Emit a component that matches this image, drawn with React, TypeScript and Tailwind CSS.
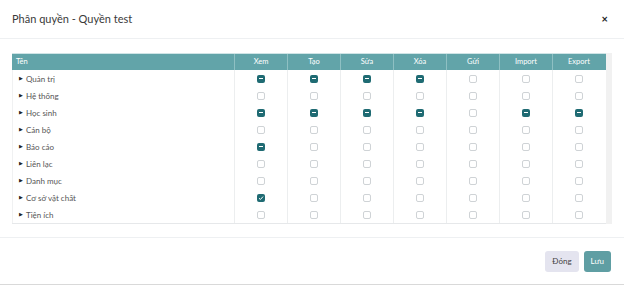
import React from 'react';

type Mark = 0 | 1 | 2; // 0 empty, 1 indeterminate, 2 checked

const columns = ['Xem', 'Tạo', 'Sửa', 'Xóa', 'Gửi', 'Import', 'Export'];

const rows: { name: string; marks: Mark[] }[] = [
  { name: 'Quản trị', marks: [1, 1, 1, 1, 0, 0, 0] },
  { name: 'Hệ thống', marks: [0, 0, 0, 0, 0, 0, 0] },
  { name: 'Học sinh', marks: [1, 1, 1, 1, 0, 1, 1] },
  { name: 'Cán bộ', marks: [0, 0, 0, 0, 0, 0, 0] },
  { name: 'Báo cáo', marks: [1, 0, 0, 0, 0, 0, 0] },
  { name: 'Liên lạc', marks: [0, 0, 0, 0, 0, 0, 0] },
  { name: 'Danh mục', marks: [0, 0, 0, 0, 0, 0, 0] },
  { name: 'Cơ sở vật chất', marks: [2, 0, 0, 0, 0, 0, 0] },
  { name: 'Tiện ích', marks: [0, 0, 0, 0, 0, 0, 0] },
];

const Box: React.FC<{ mark: Mark }> = ({ mark }) => {
  if (mark === 0) {
    return <span className="block w-[8px] h-[8px] rounded-[2px] border border-[#cfd3d6] bg-white" />;
  }
  return (
    <span className="flex items-center justify-center w-[8px] h-[8px] rounded-[2px] bg-[#1f6b73]">
      {mark === 1 ? (
        <span className="block w-[4px] h-[1.5px] bg-white" />
      ) : (
        <svg width="6" height="6" viewBox="0 0 6 6">
          <path d="M1 3.2 L2.4 4.5 L5 1.6" stroke="white" strokeWidth="1" fill="none" />
        </svg>
      )}
    </span>
  );
};

const App: React.FC = () => {
  return (
    <div
      className="w-[624px] h-[285px] bg-white flex flex-col text-[#333] border-b border-[#d9d9d9]"
      style={{ fontFamily: 'Lato, "Noto Sans", sans-serif' }}
    >
      <div className="h-[39px] flex items-center justify-between pl-[12px] pr-[16px] border-b border-[#eef0f2]">
        <span className="text-[11px] text-[#3a3a3a]">Phân quyền - Quyền test</span>
        <span className="text-[11px] font-bold text-[#222]">×</span>
      </div>

      <div className="pt-[14px] pl-[12px] pr-[12px] pb-[13px] border-b border-[#eef0f2]">
        <div className="flex">
          <div className="w-[594px] border-b border-[#e6e8ea]">
            <div className="grid grid-cols-[222px_repeat(7,53px)] h-[17px] bg-[#62a4a9] text-white text-[7.5px] border-t border-[#cfe4e6]">
              <div className="flex items-center pl-[4px]">Tên</div>
              {columns.map((c) => (
                <div key={c} className="flex items-center justify-center border-l border-[#8fc0c3]">
                  {c}
                </div>
              ))}
            </div>
            {rows.map((r) => (
              <div key={r.name} className="grid grid-cols-[222px_repeat(7,53px)] h-[17px] text-[8px] text-[#555]">
                <div className="flex items-center pl-[6px] gap-[3px] border-l border-[#f0f1f2]">
                  <span className="text-[5px] text-[#222]">▶</span>
                  <span>{r.name}</span>
                </div>
                {r.marks.map((m, i) => (
                  <div key={i} className="flex items-center justify-center border-l border-[#eceeef]">
                    <Box mark={m} />
                  </div>
                ))}
              </div>
            ))}
          </div>
          <div className="w-[6px] bg-[#f1f1f1]" />
        </div>
      </div>

      <div className="flex-1 flex items-center justify-end gap-[5px] pr-[13px]">
        <button className="h-[21px] px-[7px] rounded-[3px] bg-[#e4e4ef] text-[8px] text-[#444]">Đóng</button>
        <button className="h-[21px] px-[7px] rounded-[3px] bg-[#5f9ea3] text-[8px] text-white">Lưu</button>
      </div>
    </div>
  );
};

export default App;
